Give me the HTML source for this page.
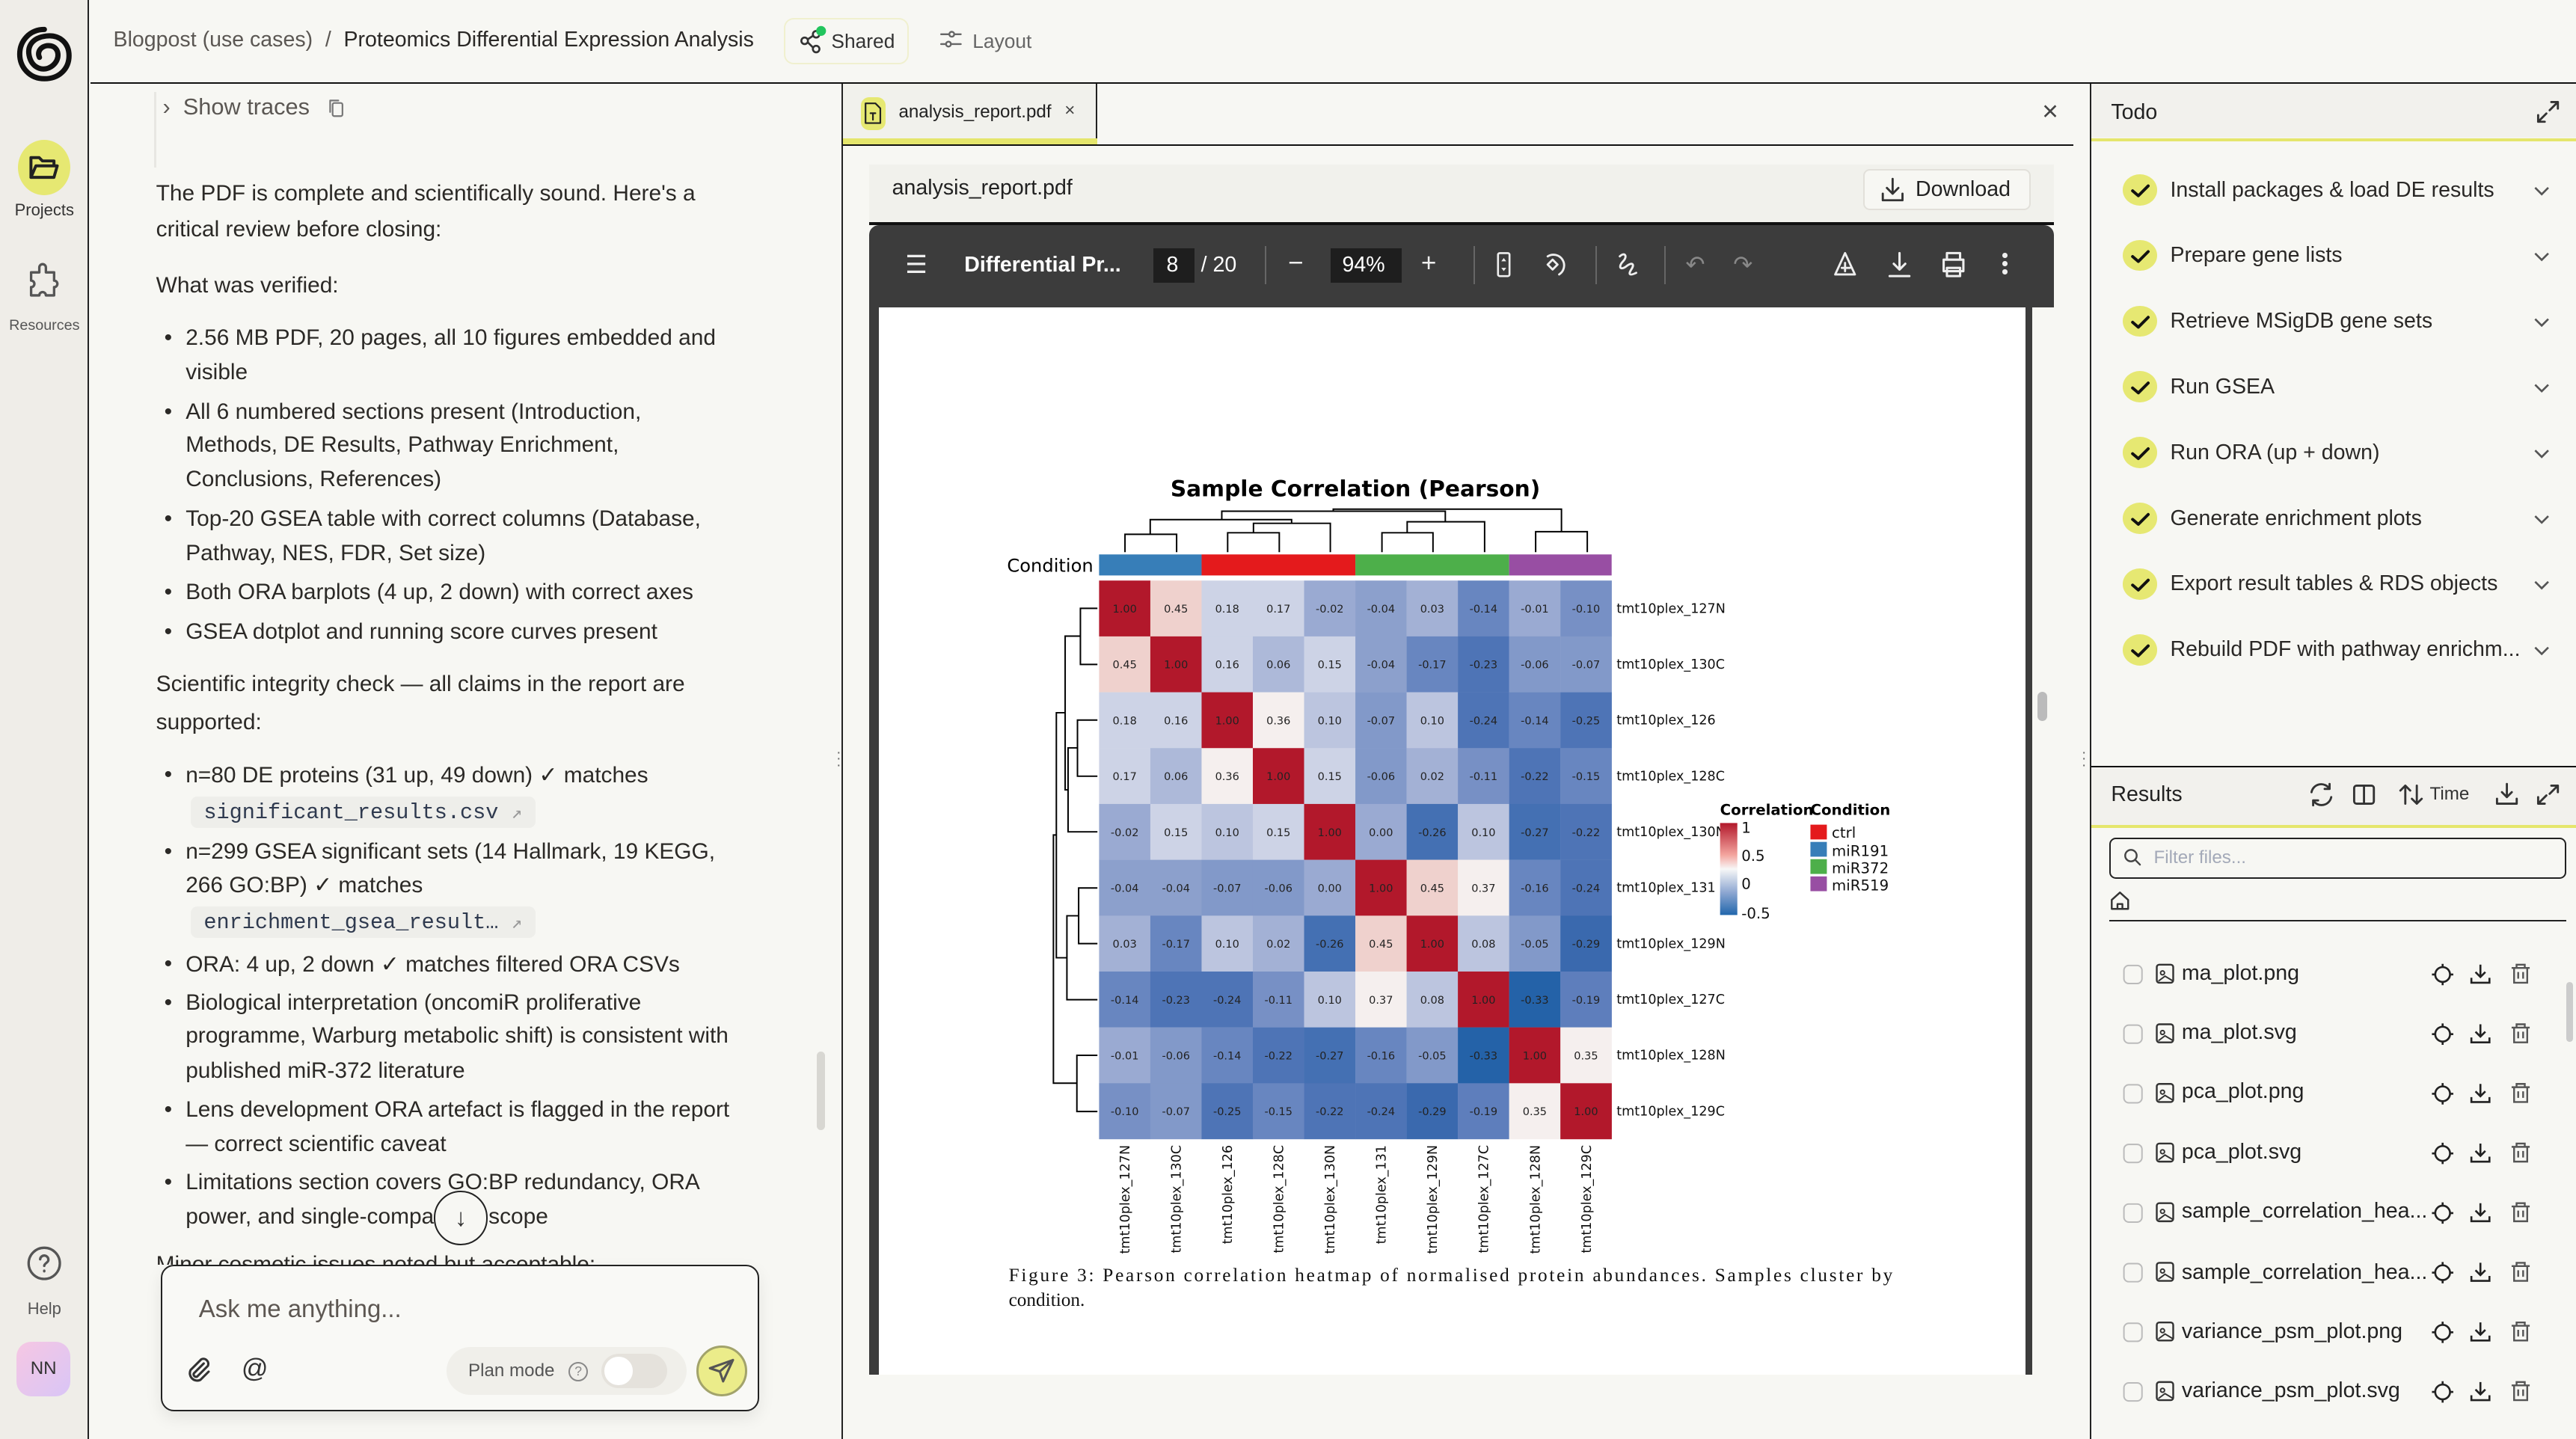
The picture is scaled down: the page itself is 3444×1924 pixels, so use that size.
<!DOCTYPE html>
<html><head><meta charset="utf-8"><style>
*{box-sizing:border-box;margin:0;padding:0}
html,body{width:3444px;height:1924px;overflow:hidden;background:#f7f7f3}
#r{zoom:2.19643;width:1568px;height:876px;position:relative;font-family:"Liberation Sans",sans-serif;color:#2a2826;background:#f7f7f3}
.a{position:absolute;white-space:nowrap}
.t{font-size:13.6px;color:#2b2926}
.code{font-family:"Liberation Mono",monospace;font-size:13px;color:#2f3a4f;background:#eeeeea;border-radius:4px;padding:2px 8px}
svg{position:absolute;overflow:visible}
.ic{fill:none;stroke:#333;stroke-width:1.5;stroke-linecap:round;stroke-linejoin:round}
.todo .c{position:absolute;left:1292px;width:21px;height:19px;border-radius:50%;background:#e6e872}
.hm text{font-family:"DejaVu Sans",sans-serif}
.hm text.serif{font-family:"Liberation Serif",serif}
.cv text{font-size:6.6px;text-anchor:middle;fill:#222}
.p1{fill:#b2182b}.p45{fill:#efd1cd}.p36{fill:#f5efee}.q18{fill:#cdd3e6}.q10{fill:#bcc5df}.q06{fill:#adb9d9}.q02{fill:#a3b1d5}.q00{fill:#9aaad2}.n04{fill:#8ca0cc}.n06{fill:#8299c9}.n10{fill:#7790c5}.n15{fill:#6886c0}.n19{fill:#5e7ebc}.n23{fill:#4e74b6}.n27{fill:#4470b3}.n29{fill:#3a69ae}.n33{fill:#2462a8}
</style></head><body><div id="r">

<!-- left rail -->
<div class="a" style="left:0;top:0;width:54px;height:876px;background:#efede8;border-right:1px solid #222"></div>
<svg style="left:10px;top:16px" width="34" height="34" viewBox="0 0 34 34"><path d="M17 2C8 2 2 9 2 17s6 15 15 15 15-6 15-14S26 5 18 6 6 12 8 19s9 9 14 5 4-11-1-12-9 3-7 7" fill="none" stroke="#111" stroke-width="3.2" stroke-linecap="round"/></svg>
<div class="a" style="left:11px;top:85px;width:32px;height:34px;border-radius:50%;background:#e6e872"></div>
<svg style="left:17px;top:92px" width="20" height="20" viewBox="0 0 20 20"><path class="ic" style="stroke:#222;stroke-width:1.8" d="M2 4h5l2 2h7v3M2 4v12h14l2-7H5l-3 7"/></svg>
<div class="a" style="left:0;width:54px;text-align:center;top:122px;font-size:10px;color:#333">Projects</div>
<svg style="left:16px;top:160px" width="22" height="24" viewBox="0 0 22 24"><path class="ic" style="stroke:#555" d="M8 3a2 2 0 014 0v3h5v5a2 2 0 010 4v5h-5a2 2 0 00-4 0H3v-5a2 2 0 000-4V6h5z"/></svg>
<div class="a" style="left:0;width:54px;text-align:center;top:193px;font-size:9px;color:#555">Resources</div>
<svg style="left:16px;top:758px" width="22" height="22" viewBox="0 0 22 22"><circle cx="11" cy="11" r="9.5" class="ic" style="stroke:#555"/><path class="ic" style="stroke:#555" d="M8.5 8.5a2.5 2.5 0 015 .5c0 1.5-2.5 2-2.5 3.5M11 15.5v.3"/></svg>
<div class="a" style="left:0;width:54px;text-align:center;top:791px;font-size:10px;color:#555">Help</div>
<div class="a" style="left:10px;top:817px;width:33px;height:33px;border-radius:9px;background:linear-gradient(135deg,#f6c7e3,#d9c5f6);font-size:11px;color:#333;text-align:center;line-height:33px">NN</div>

<!-- header -->
<div class="a" style="left:55px;top:50px;width:1513px;height:1px;background:#111"></div>
<div class="a" style="left:69px;top:17px;font-size:13px;color:#5b5753">Blogpost (use cases) <span style="margin:0 4px">/</span> <span style="color:#2a2826">Proteomics Differential Expression Analysis</span></div>
<div class="a" style="left:477px;top:11px;width:76px;height:28px;border:1px solid #f0f0cf;border-radius:6px"></div>
<svg style="left:486px;top:17px" width="16" height="16" viewBox="0 0 16 16"><circle cx="4" cy="8" r="2" class="ic" style="stroke-width:1.2"/><circle cx="11" cy="4" r="2" class="ic" style="stroke-width:1.2"/><circle cx="11" cy="13" r="2" class="ic" style="stroke-width:1.2"/><path class="ic" style="stroke-width:1.2" d="M6 7l3-2M6 9l3 3"/><circle cx="14" cy="2" r="3" fill="#22c55e"/></svg>
<div class="a" style="left:506px;top:18px;font-size:12px;color:#333">Shared</div>
<svg style="left:572px;top:17px" width="14" height="14" viewBox="0 0 14 14"><path class="ic" style="stroke:#666;stroke-width:1.1" d="M1 4h5M9 4h4M1 10h3M7 10h6"/><circle cx="7.5" cy="4" r="1.5" class="ic" style="stroke:#666;stroke-width:1.1"/><circle cx="5.5" cy="10" r="1.5" class="ic" style="stroke:#666;stroke-width:1.1"/></svg>
<div class="a" style="left:592px;top:18px;font-size:12px;color:#666">Layout</div>

<!-- chat panel -->
<div class="a" style="left:512px;top:51px;width:1px;height:825px;background:#222"></div>
<div class="a" style="left:94px;top:56px;width:1px;height:46px;background:#e8e7e2"></div>
<div class="a" style="left:99px;top:57px;font-size:14px;color:#5b5753">›&nbsp; Show traces</div>
<svg style="left:199px;top:59px" width="12" height="13" viewBox="0 0 12 13"><rect x="3.5" y="3.5" width="6" height="8" rx="1" class="ic" style="stroke:#777;stroke-width:1"/><path class="ic" style="stroke:#777;stroke-width:1" d="M2 9V2h5"/></svg>
<div class="a t" style="left:95px;top:110px">The PDF is complete and scientifically sound. Here's a</div>
<div class="a t" style="left:95px;top:132px">critical review before closing:</div>
<div class="a t" style="left:95px;top:166px">What was verified:</div>
<div class="a t" style="left:100px;top:198px">•</div><div class="a t" style="left:113px;top:198px">2.56 MB PDF, 20 pages, all 10 figures embedded and</div>
<div class="a t" style="left:113px;top:219px">visible</div>
<div class="a t" style="left:100px;top:243px">•</div><div class="a t" style="left:113px;top:243px">All 6 numbered sections present (Introduction,</div>
<div class="a t" style="left:113px;top:263px">Methods, DE Results, Pathway Enrichment,</div>
<div class="a t" style="left:113px;top:284px">Conclusions, References)</div>
<div class="a t" style="left:100px;top:308px">•</div><div class="a t" style="left:113px;top:308px">Top-20 GSEA table with correct columns (Database,</div>
<div class="a t" style="left:113px;top:329px">Pathway, NES, FDR, Set size)</div>
<div class="a t" style="left:100px;top:353px">•</div><div class="a t" style="left:113px;top:353px">Both ORA barplots (4 up, 2 down) with correct axes</div>
<div class="a t" style="left:100px;top:377px">•</div><div class="a t" style="left:113px;top:377px">GSEA dotplot and running score curves present</div>
<div class="a t" style="left:95px;top:409px">Scientific integrity check — all claims in the report are</div>
<div class="a t" style="left:95px;top:432px">supported:</div>
<div class="a t" style="left:100px;top:464px">•</div><div class="a t" style="left:113px;top:464px">n=80 DE proteins (31 up, 49 down) ✓ matches</div>
<div class="a code" style="left:116px;top:485px">significant_results.csv <span style="color:#999;font-size:11px">↗</span></div>
<div class="a t" style="left:100px;top:511px">•</div><div class="a t" style="left:113px;top:511px">n=299 GSEA significant sets (14 Hallmark, 19 KEGG,</div>
<div class="a t" style="left:113px;top:531px">266 GO:BP) ✓ matches</div>
<div class="a code" style="left:116px;top:552px">enrichment_gsea_result… <span style="color:#999;font-size:11px">↗</span></div>
<div class="a t" style="left:100px;top:579px">•</div><div class="a t" style="left:113px;top:579px">ORA: 4 up, 2 down ✓ matches filtered ORA CSVs</div>
<div class="a t" style="left:100px;top:603px">•</div><div class="a t" style="left:113px;top:603px">Biological interpretation (oncomiR proliferative</div>
<div class="a t" style="left:113px;top:623px">programme, Warburg metabolic shift) is consistent with</div>
<div class="a t" style="left:113px;top:644px">published miR-372 literature</div>
<div class="a t" style="left:100px;top:668px">•</div><div class="a t" style="left:113px;top:668px">Lens development ORA artefact is flagged in the report</div>
<div class="a t" style="left:113px;top:689px">— correct scientific caveat</div>
<div class="a t" style="left:100px;top:712px">•</div><div class="a t" style="left:113px;top:712px">Limitations section covers GO:BP redundancy, ORA</div>
<div class="a t" style="left:113px;top:733px">power, and single-comparison scope</div>
<div class="a t" style="left:95px;top:762px;height:8px;overflow:hidden">Minor cosmetic issues noted but acceptable:</div>
<div class="a" style="left:264px;top:725px;width:33px;height:33px;border-radius:50%;border:1px solid #222;background:#f7f7f3;text-align:center;line-height:31px;font-size:15px;color:#333">↓</div>
<div class="a" style="left:497px;top:640px;width:5px;height:48px;border-radius:3px;background:#d8d7d2"></div>
<div class="a" style="left:98px;top:770px;width:364px;height:89px;border:1px solid #222;border-radius:8px;background:#f9f9f6;box-shadow:0 4px 10px rgba(0,0,0,.08)"></div>
<div class="a" style="left:121px;top:788px;font-size:15px;color:#5d5752">Ask me anything...</div>
<svg style="left:112px;top:825px" width="18" height="18" viewBox="0 0 18 18"><path class="ic" style="stroke-width:1.4" d="M12 5l-6 6a1.5 1.5 0 002 2l6.5-6.5a3 3 0 00-4-4L4 9a4.5 4.5 0 006 6l5-5"/></svg>
<div class="a" style="left:147px;top:824px;font-size:16px;color:#333">@</div>
<div class="a" style="left:272px;top:820px;width:146px;height:29px;border-radius:15px;background:#f0efea"></div>
<div class="a" style="left:285px;top:828px;font-size:11px;color:#555">Plan mode</div>
<div class="a" style="left:346px;top:829px;width:12px;height:12px;border:1px solid #888;border-radius:50%;font-size:8px;color:#888;text-align:center;line-height:10px">?</div>
<div class="a" style="left:366px;top:824px;width:40px;height:21px;border-radius:11px;background:#e5e2dc"></div>
<div class="a" style="left:368px;top:826px;width:17px;height:17px;border-radius:50%;background:#fff"></div>
<div class="a" style="left:424px;top:819px;width:31px;height:31px;border-radius:50%;background:#ebec8a;border:1.5px solid #a2a36b"></div>
<svg style="left:431px;top:826px" width="17" height="17" viewBox="0 0 17 17"><path class="ic" style="stroke:#555;stroke-width:1.4" d="M15 2L1 7l6 2 2 6zM15 2L7 9"/></svg>
<div class="a" style="left:509px;top:456px;font-size:9px;color:#666;line-height:4px">·<br>·<br>·</div>

<!-- PDF panel -->
<div class="a" style="left:1272px;top:51px;width:1px;height:825px;background:#222"></div>
<div class="a" style="left:513px;top:51px;width:155px;height:37px;background:#f1f1ec;border-right:1px solid #222"></div>
<div class="a" style="left:513px;top:84px;width:155px;height:4px;background:#e5e66c"></div>
<div class="a" style="left:513px;top:88px;width:749px;height:1px;background:#111"></div>
<div class="a" style="left:524px;top:59px;width:15px;height:20px;border-radius:5px;background:#e6e872"></div>
<svg style="left:526px;top:62px" width="11" height="14" viewBox="0 0 11 14"><path class="ic" style="stroke:#222;stroke-width:1" d="M1 1h6l3 3v9H1zM4 7h3M5.5 7v4"/></svg>
<div class="a" style="left:547px;top:62px;font-size:11px;color:#222">analysis_report.pdf</div>
<div class="a" style="left:648px;top:61px;font-size:11px;color:#444">×</div>
<div class="a" style="left:1243px;top:58px;font-size:17px;color:#444">×</div>
<div class="a" style="left:529px;top:100px;width:721px;height:35px;background:#f1f1ec"></div>
<div class="a" style="left:529px;top:135px;width:721px;height:2px;background:#111"></div>
<div class="a" style="left:543px;top:107px;font-size:13px;color:#222">analysis_report.pdf</div>
<div class="a" style="left:1134px;top:103px;width:102px;height:25px;border:1px solid #e2e0da;border-radius:4px;background:#f7f7f3"></div>
<svg style="left:1145px;top:108px" width="14" height="15" viewBox="0 0 14 15"><path class="ic" style="stroke:#333;stroke-width:1.3" d="M7 1v9M3.5 6.5L7 10l3.5-3.5M1 10v4h12v-4"/></svg>
<div class="a" style="left:1166px;top:108px;font-size:13px;color:#222">Download</div>
<div class="a" style="left:529px;top:137px;width:721px;height:50px;background:#3c3c3c;border-radius:6px 6px 0 0"></div>
<div class="a" style="left:529px;top:187px;width:6px;height:650px;background:#3c3c3c"></div>
<div class="a" style="left:1233px;top:187px;width:4px;height:650px;background:#3c3c3c"></div>
<div class="a" style="left:535px;top:187px;width:698px;height:650px;background:#fff"></div>
<div class="a" style="left:1240px;top:421px;width:6px;height:18px;border-radius:3px;background:#bbb"></div>
<div class="a" style="left:551px;top:152px;font-size:15px;color:#eee">☰</div>
<div class="a" style="left:587px;top:154px;font-size:13px;color:#fff;font-weight:bold">Differential Pr...</div>
<div class="a" style="left:702px;top:151px;width:25px;height:21px;background:#1e1e1e"></div>
<div class="a" style="left:710px;top:154px;font-size:13px;color:#fff">8</div>
<div class="a" style="left:731px;top:154px;font-size:13px;color:#fff">/ 20</div>
<div class="a" style="left:770px;top:150px;width:1px;height:23px;background:#666"></div>
<div class="a" style="left:784px;top:151px;font-size:16px;color:#eee">−</div>
<div class="a" style="left:810px;top:151px;width:43px;height:21px;background:#1e1e1e"></div>
<div class="a" style="left:817px;top:154px;font-size:13px;color:#fff">94%</div>
<div class="a" style="left:865px;top:151px;font-size:16px;color:#eee">+</div>
<div class="a" style="left:897px;top:150px;width:1px;height:23px;background:#666"></div>
<svg style="left:908px;top:152px" width="16" height="18" viewBox="0 0 16 18"><rect x="4" y="2" width="7" height="14" rx="1" class="ic" style="stroke:#eee;stroke-width:1.2"/><path d="M7.5 5l-1.5 2h3zM7.5 13l-1.5-2h3z" fill="#eee"/></svg>
<svg style="left:936px;top:152px" width="18" height="18" viewBox="0 0 18 18"><path class="ic" style="stroke:#eee;stroke-width:1.3" d="M6 4a6 6 0 117 11M9 6l-3 3 3 3 3-3z"/></svg>
<div class="a" style="left:971px;top:150px;width:1px;height:23px;background:#666"></div>
<svg style="left:983px;top:152px" width="17" height="18" viewBox="0 0 17 18"><path class="ic" style="stroke:#eee;stroke-width:1.3" d="M3 4c3-3 5 0 2 3s-2 6 2 3 5-1 3 2-1 4 3 2"/></svg>
<div class="a" style="left:1013px;top:150px;width:1px;height:23px;background:#666"></div>
<div class="a" style="left:1026px;top:153px;font-size:14px;color:#888">↶</div>
<div class="a" style="left:1055px;top:153px;font-size:14px;color:#888">↷</div>
<svg style="left:1114px;top:152px" width="18" height="18" viewBox="0 0 18 18"><path class="ic" style="stroke:#eee;stroke-width:1.3" d="M3 15l6-13 6 13zM9 8v5M7 11h5"/></svg>
<svg style="left:1148px;top:152px" width="16" height="18" viewBox="0 0 16 18"><path class="ic" style="stroke:#eee;stroke-width:1.4" d="M8 2v10M4.5 8.5L8 12l3.5-3.5M2 16h12"/></svg>
<svg style="left:1180px;top:152px" width="18" height="18" viewBox="0 0 18 18"><path class="ic" style="stroke:#eee;stroke-width:1.4" d="M5 6V2h8v4M3 6h12v7H3zM5 11h8v5H5z"/></svg>
<div class="a" style="left:1219px;top:154px;width:3px;height:3px;border-radius:50%;background:#eee;box-shadow:0 5px 0 #eee,0 10px 0 #eee"></div>

<!-- heatmap -->
<svg class="hm" style="left:0;top:0" width="1568" height="876" viewBox="0 0 1568 876">
<text x="825" y="302" text-anchor="middle" font-size="13.5" font-weight="bold" fill="#000">Sample Correlation (Pearson)</text>
<text x="613" y="348" font-size="11" fill="#000">Condition</text>
<rect x="669" y="337.5" width="62.4" height="12.8" fill="#377eb8"/>
<rect x="731.4" y="337.5" width="93.6" height="12.8" fill="#e41a1c"/>
<rect x="825" y="337.5" width="93.6" height="12.8" fill="#4daf4a"/>
<rect x="918.6" y="337.5" width="62.4" height="12.8" fill="#984ea3"/>
<g transform="matrix(0.3571,0,0,0.3194,605.5,273.2)" fill="none" stroke="#000">
<path vector-effect="non-scaling-stroke" stroke-width="0.9" d="M222 197V163H310V197M397 197V160H485V197M441 160V142H572V197M265 163V135H506V142M387 135V119H768V139M660 197V160H747V197M703 160V139H835V197M577 119V115H966V158M922 197V158H1010V197M175 304H146V411H175M175 517H141V624H175M141 570H125V730H175M146 357H120V650H125M175 837H143V943H175M143 890H123V1050H175M120 503H105V970H123M175 1156H140V1263H175M105 736H100V1209H140"/>
</g>
<g class="cv">
<g transform="translate(0,353.4)"><rect x="669" width="31.3" height="34.1" class="p1"/><rect x="700.2" width="31.3" height="34.1" class="p45"/><rect x="731.4" width="31.3" height="34.1" class="q18"/><rect x="762.6" width="31.3" height="34.1" class="q18"/><rect x="793.8" width="31.3" height="34.1" class="q00"/><rect x="825" width="31.3" height="34.1" class="n04"/><rect x="856.2" width="31.3" height="34.1" class="q02"/><rect x="887.4" width="31.3" height="34.1" class="n15"/><rect x="918.6" width="31.3" height="34.1" class="q00"/><rect x="949.8" width="31.3" height="34.1" class="n10"/>
<text x="684.6" y="19.5">1.00</text><text x="715.8" y="19.5">0.45</text><text x="747" y="19.5">0.18</text><text x="778.2" y="19.5">0.17</text><text x="809.4" y="19.5">-0.02</text><text x="840.6" y="19.5">-0.04</text><text x="871.8" y="19.5">0.03</text><text x="903" y="19.5">-0.14</text><text x="934.2" y="19.5">-0.01</text><text x="965.4" y="19.5">-0.10</text></g>
<g transform="translate(0,387.4)"><rect x="669" width="31.3" height="34.1" class="p45"/><rect x="700.2" width="31.3" height="34.1" class="p1"/><rect x="731.4" width="31.3" height="34.1" class="q18"/><rect x="762.6" width="31.3" height="34.1" class="q06"/><rect x="793.8" width="31.3" height="34.1" class="q18"/><rect x="825" width="31.3" height="34.1" class="n04"/><rect x="856.2" width="31.3" height="34.1" class="n15"/><rect x="887.4" width="31.3" height="34.1" class="n23"/><rect x="918.6" width="31.3" height="34.1" class="n06"/><rect x="949.8" width="31.3" height="34.1" class="n06"/>
<text x="684.6" y="19.5">0.45</text><text x="715.8" y="19.5">1.00</text><text x="747" y="19.5">0.16</text><text x="778.2" y="19.5">0.06</text><text x="809.4" y="19.5">0.15</text><text x="840.6" y="19.5">-0.04</text><text x="871.8" y="19.5">-0.17</text><text x="903" y="19.5">-0.23</text><text x="934.2" y="19.5">-0.06</text><text x="965.4" y="19.5">-0.07</text></g>
<g transform="translate(0,421.4)"><rect x="669" width="31.3" height="34.1" class="q18"/><rect x="700.2" width="31.3" height="34.1" class="q18"/><rect x="731.4" width="31.3" height="34.1" class="p1"/><rect x="762.6" width="31.3" height="34.1" class="p36"/><rect x="793.8" width="31.3" height="34.1" class="q10"/><rect x="825" width="31.3" height="34.1" class="n06"/><rect x="856.2" width="31.3" height="34.1" class="q10"/><rect x="887.4" width="31.3" height="34.1" class="n23"/><rect x="918.6" width="31.3" height="34.1" class="n15"/><rect x="949.8" width="31.3" height="34.1" class="n23"/>
<text x="684.6" y="19.5">0.18</text><text x="715.8" y="19.5">0.16</text><text x="747" y="19.5">1.00</text><text x="778.2" y="19.5">0.36</text><text x="809.4" y="19.5">0.10</text><text x="840.6" y="19.5">-0.07</text><text x="871.8" y="19.5">0.10</text><text x="903" y="19.5">-0.24</text><text x="934.2" y="19.5">-0.14</text><text x="965.4" y="19.5">-0.25</text></g>
<g transform="translate(0,455.4)"><rect x="669" width="31.3" height="34.1" class="q18"/><rect x="700.2" width="31.3" height="34.1" class="q06"/><rect x="731.4" width="31.3" height="34.1" class="p36"/><rect x="762.6" width="31.3" height="34.1" class="p1"/><rect x="793.8" width="31.3" height="34.1" class="q18"/><rect x="825" width="31.3" height="34.1" class="n06"/><rect x="856.2" width="31.3" height="34.1" class="q02"/><rect x="887.4" width="31.3" height="34.1" class="n10"/><rect x="918.6" width="31.3" height="34.1" class="n23"/><rect x="949.8" width="31.3" height="34.1" class="n15"/>
<text x="684.6" y="19.5">0.17</text><text x="715.8" y="19.5">0.06</text><text x="747" y="19.5">0.36</text><text x="778.2" y="19.5">1.00</text><text x="809.4" y="19.5">0.15</text><text x="840.6" y="19.5">-0.06</text><text x="871.8" y="19.5">0.02</text><text x="903" y="19.5">-0.11</text><text x="934.2" y="19.5">-0.22</text><text x="965.4" y="19.5">-0.15</text></g>
<g transform="translate(0,489.4)"><rect x="669" width="31.3" height="34.1" class="q00"/><rect x="700.2" width="31.3" height="34.1" class="q18"/><rect x="731.4" width="31.3" height="34.1" class="q10"/><rect x="762.6" width="31.3" height="34.1" class="q18"/><rect x="793.8" width="31.3" height="34.1" class="p1"/><rect x="825" width="31.3" height="34.1" class="q00"/><rect x="856.2" width="31.3" height="34.1" class="n27"/><rect x="887.4" width="31.3" height="34.1" class="q10"/><rect x="918.6" width="31.3" height="34.1" class="n27"/><rect x="949.8" width="31.3" height="34.1" class="n23"/>
<text x="684.6" y="19.5">-0.02</text><text x="715.8" y="19.5">0.15</text><text x="747" y="19.5">0.10</text><text x="778.2" y="19.5">0.15</text><text x="809.4" y="19.5">1.00</text><text x="840.6" y="19.5">0.00</text><text x="871.8" y="19.5">-0.26</text><text x="903" y="19.5">0.10</text><text x="934.2" y="19.5">-0.27</text><text x="965.4" y="19.5">-0.22</text></g>
<g transform="translate(0,523.4)"><rect x="669" width="31.3" height="34.1" class="n04"/><rect x="700.2" width="31.3" height="34.1" class="n04"/><rect x="731.4" width="31.3" height="34.1" class="n06"/><rect x="762.6" width="31.3" height="34.1" class="n06"/><rect x="793.8" width="31.3" height="34.1" class="q00"/><rect x="825" width="31.3" height="34.1" class="p1"/><rect x="856.2" width="31.3" height="34.1" class="p45"/><rect x="887.4" width="31.3" height="34.1" class="p36"/><rect x="918.6" width="31.3" height="34.1" class="n15"/><rect x="949.8" width="31.3" height="34.1" class="n23"/>
<text x="684.6" y="19.5">-0.04</text><text x="715.8" y="19.5">-0.04</text><text x="747" y="19.5">-0.07</text><text x="778.2" y="19.5">-0.06</text><text x="809.4" y="19.5">0.00</text><text x="840.6" y="19.5">1.00</text><text x="871.8" y="19.5">0.45</text><text x="903" y="19.5">0.37</text><text x="934.2" y="19.5">-0.16</text><text x="965.4" y="19.5">-0.24</text></g>
<g transform="translate(0,557.4)"><rect x="669" width="31.3" height="34.1" class="q02"/><rect x="700.2" width="31.3" height="34.1" class="n15"/><rect x="731.4" width="31.3" height="34.1" class="q10"/><rect x="762.6" width="31.3" height="34.1" class="q02"/><rect x="793.8" width="31.3" height="34.1" class="n27"/><rect x="825" width="31.3" height="34.1" class="p45"/><rect x="856.2" width="31.3" height="34.1" class="p1"/><rect x="887.4" width="31.3" height="34.1" class="q10"/><rect x="918.6" width="31.3" height="34.1" class="n06"/><rect x="949.8" width="31.3" height="34.1" class="n29"/>
<text x="684.6" y="19.5">0.03</text><text x="715.8" y="19.5">-0.17</text><text x="747" y="19.5">0.10</text><text x="778.2" y="19.5">0.02</text><text x="809.4" y="19.5">-0.26</text><text x="840.6" y="19.5">0.45</text><text x="871.8" y="19.5">1.00</text><text x="903" y="19.5">0.08</text><text x="934.2" y="19.5">-0.05</text><text x="965.4" y="19.5">-0.29</text></g>
<g transform="translate(0,591.4)"><rect x="669" width="31.3" height="34.1" class="n15"/><rect x="700.2" width="31.3" height="34.1" class="n23"/><rect x="731.4" width="31.3" height="34.1" class="n23"/><rect x="762.6" width="31.3" height="34.1" class="n10"/><rect x="793.8" width="31.3" height="34.1" class="q10"/><rect x="825" width="31.3" height="34.1" class="p36"/><rect x="856.2" width="31.3" height="34.1" class="q10"/><rect x="887.4" width="31.3" height="34.1" class="p1"/><rect x="918.6" width="31.3" height="34.1" class="n33"/><rect x="949.8" width="31.3" height="34.1" class="n19"/>
<text x="684.6" y="19.5">-0.14</text><text x="715.8" y="19.5">-0.23</text><text x="747" y="19.5">-0.24</text><text x="778.2" y="19.5">-0.11</text><text x="809.4" y="19.5">0.10</text><text x="840.6" y="19.5">0.37</text><text x="871.8" y="19.5">0.08</text><text x="903" y="19.5">1.00</text><text x="934.2" y="19.5">-0.33</text><text x="965.4" y="19.5">-0.19</text></g>
<g transform="translate(0,625.4)"><rect x="669" width="31.3" height="34.1" class="q00"/><rect x="700.2" width="31.3" height="34.1" class="n06"/><rect x="731.4" width="31.3" height="34.1" class="n15"/><rect x="762.6" width="31.3" height="34.1" class="n23"/><rect x="793.8" width="31.3" height="34.1" class="n27"/><rect x="825" width="31.3" height="34.1" class="n15"/><rect x="856.2" width="31.3" height="34.1" class="n06"/><rect x="887.4" width="31.3" height="34.1" class="n33"/><rect x="918.6" width="31.3" height="34.1" class="p1"/><rect x="949.8" width="31.3" height="34.1" class="p36"/>
<text x="684.6" y="19.5">-0.01</text><text x="715.8" y="19.5">-0.06</text><text x="747" y="19.5">-0.14</text><text x="778.2" y="19.5">-0.22</text><text x="809.4" y="19.5">-0.27</text><text x="840.6" y="19.5">-0.16</text><text x="871.8" y="19.5">-0.05</text><text x="903" y="19.5">-0.33</text><text x="934.2" y="19.5">1.00</text><text x="965.4" y="19.5">0.35</text></g>
<g transform="translate(0,659.4)"><rect x="669" width="31.3" height="34.1" class="n10"/><rect x="700.2" width="31.3" height="34.1" class="n06"/><rect x="731.4" width="31.3" height="34.1" class="n23"/><rect x="762.6" width="31.3" height="34.1" class="n15"/><rect x="793.8" width="31.3" height="34.1" class="n23"/><rect x="825" width="31.3" height="34.1" class="n23"/><rect x="856.2" width="31.3" height="34.1" class="n29"/><rect x="887.4" width="31.3" height="34.1" class="n19"/><rect x="918.6" width="31.3" height="34.1" class="p36"/><rect x="949.8" width="31.3" height="34.1" class="p1"/>
<text x="684.6" y="19.5">-0.10</text><text x="715.8" y="19.5">-0.07</text><text x="747" y="19.5">-0.25</text><text x="778.2" y="19.5">-0.15</text><text x="809.4" y="19.5">-0.22</text><text x="840.6" y="19.5">-0.24</text><text x="871.8" y="19.5">-0.29</text><text x="903" y="19.5">-0.19</text><text x="934.2" y="19.5">0.35</text><text x="965.4" y="19.5">1.00</text></g>
</g>
<g font-size="8" fill="#111">
<text x="984" y="373">tmt10plex_127N</text><text x="984" y="407">tmt10plex_130C</text><text x="984" y="441">tmt10plex_126</text><text x="984" y="475">tmt10plex_128C</text><text x="984" y="509">tmt10plex_130N</text><text x="984" y="543">tmt10plex_131</text><text x="984" y="577">tmt10plex_129N</text><text x="984" y="611">tmt10plex_127C</text><text x="984" y="645">tmt10plex_128N</text><text x="984" y="679">tmt10plex_129C</text>
</g>
<g font-size="8" fill="#111" text-anchor="end">
<text transform="translate(687.5,697) rotate(-90)">tmt10plex_127N</text><text transform="translate(718.7,697) rotate(-90)">tmt10plex_130C</text><text transform="translate(749.9,697) rotate(-90)">tmt10plex_126</text><text transform="translate(781.1,697) rotate(-90)">tmt10plex_128C</text><text transform="translate(812.3,697) rotate(-90)">tmt10plex_130N</text><text transform="translate(843.5,697) rotate(-90)">tmt10plex_131</text><text transform="translate(874.7,697) rotate(-90)">tmt10plex_129N</text><text transform="translate(905.9,697) rotate(-90)">tmt10plex_127C</text><text transform="translate(937.1,697) rotate(-90)">tmt10plex_128N</text><text transform="translate(968.3,697) rotate(-90)">tmt10plex_129C</text>
</g>
<defs><linearGradient id="lg" x1="0" y1="0" x2="0" y2="1"><stop offset="0" stop-color="#b2182b"/><stop offset=".35" stop-color="#f4a6a0"/><stop offset=".5" stop-color="#f7f7f7"/><stop offset=".75" stop-color="#8fa8d2"/><stop offset="1" stop-color="#2166ac"/></linearGradient></defs>
<text x="1047" y="496" font-size="9" font-weight="bold" fill="#000">Correlation</text>
<text x="1102" y="496" font-size="9" font-weight="bold" fill="#000">Condition</text>
<rect x="1047" y="501" width="10.5" height="56" fill="url(#lg)"/>
<g font-size="9" fill="#111"><text x="1060" y="507">1</text><text x="1060" y="524">0.5</text><text x="1060" y="541">0</text><text x="1060" y="559">-0.5</text>
<rect x="1102" y="502" width="10" height="9" fill="#e41a1c"/><rect x="1102" y="512.5" width="10" height="9" fill="#377eb8"/><rect x="1102" y="523" width="10" height="9" fill="#4daf4a"/><rect x="1102" y="533.5" width="10" height="9" fill="#984ea3"/>
<text x="1115" y="510">ctrl</text><text x="1115" y="521">miR191</text><text x="1115" y="531.5">miR372</text><text x="1115" y="542">miR519</text></g>
<g font-size="11.5" fill="#111"><text class="serif" style="font-family:'Liberation Serif',serif" x="614" y="780" textLength="538" lengthAdjust="spacing">Figure 3:  Pearson correlation heatmap of normalised protein abundances.  Samples cluster by</text><text class="serif" style="font-family:'Liberation Serif',serif" x="614" y="795">condition.</text></g>
</svg>

<!-- right panel -->
<div class="a" style="left:1273px;top:51px;width:295px;height:33px;background:#f2f1ed"></div>
<div class="a" style="left:1273px;top:84px;width:295px;height:2px;background:#e5e66c"></div>
<div class="a" style="left:1285px;top:61px;font-size:13px;color:#222">Todo</div>
<svg style="left:1543px;top:60px" width="16" height="16" viewBox="0 0 16 16"><path class="ic" style="stroke-width:1.3" d="M10 2h4v4M14 2L9 7M6 14H2v-4M2 14l5-5"/></svg>
<div class="todo">
<div class="c" style="top:106px"></div><div class="c" style="top:146px"></div><div class="c" style="top:186px"></div><div class="c" style="top:226px"></div><div class="c" style="top:266px"></div><div class="c" style="top:306px"></div><div class="c" style="top:346px"></div><div class="c" style="top:386px"></div>
</div>
<svg style="left:1292px;top:100px" width="21" height="310" viewBox="0 0 21 310"><path fill="none" stroke="#111" stroke-width="1.8" stroke-linecap="round" stroke-linejoin="round" d="M6 16l3.5 3 6-6M6 56l3.5 3 6-6M6 96l3.5 3 6-6M6 136l3.5 3 6-6M6 176l3.5 3 6-6M6 216l3.5 3 6-6M6 256l3.5 3 6-6M6 296l3.5 3 6-6"/></svg>
<div class="a" style="left:1321px;top:108px;font-size:13px;color:#2a2826;line-height:16px">Install packages &amp; load DE results</div>
<div class="a" style="left:1321px;top:148px;font-size:13px;color:#2a2826">Prepare gene lists</div>
<div class="a" style="left:1321px;top:188px;font-size:13px;color:#2a2826">Retrieve MSigDB gene sets</div>
<div class="a" style="left:1321px;top:228px;font-size:13px;color:#2a2826">Run GSEA</div>
<div class="a" style="left:1321px;top:268px;font-size:13px;color:#2a2826">Run ORA (up + down)</div>
<div class="a" style="left:1321px;top:308px;font-size:13px;color:#2a2826">Generate enrichment plots</div>
<div class="a" style="left:1321px;top:348px;font-size:13px;color:#2a2826">Export result tables &amp; RDS objects</div>
<div class="a" style="left:1321px;top:388px;font-size:13px;color:#2a2826">Rebuild PDF with pathway enrichm...</div>
<svg style="left:1541px;top:110px" width="12" height="300" viewBox="0 0 12 300"><path fill="none" stroke="#555" stroke-width="1.2" d="M2 4l4 4 4-4M2 44l4 4 4-4M2 84l4 4 4-4M2 124l4 4 4-4M2 164l4 4 4-4M2 204l4 4 4-4M2 244l4 4 4-4M2 284l4 4 4-4"/></svg>
<div class="a" style="left:1267px;top:456px;font-size:9px;color:#666;line-height:4px">·<br>·<br>·</div>
<div class="a" style="left:1273px;top:466px;width:295px;height:1px;background:#111"></div>
<div class="a" style="left:1273px;top:467px;width:295px;height:35px;background:#f2f1ed"></div>
<div class="a" style="left:1273px;top:502px;width:295px;height:2px;background:#e5e66c"></div>
<div class="a" style="left:1285px;top:476px;font-size:13px;color:#222">Results</div>
<svg style="left:1405px;top:476px" width="16" height="15" viewBox="0 0 16 15"><path class="ic" style="stroke-width:1.3" d="M2 6a6 6 0 0111-2M14 9a6 6 0 01-11 2M13 1v3h-3M3 14v-3h3"/></svg>
<svg style="left:1431px;top:476px" width="16" height="15" viewBox="0 0 16 15"><rect x="2" y="2" width="12" height="11" rx="1.5" class="ic" style="stroke-width:1.3"/><path class="ic" style="stroke-width:1.3" d="M8 2v11"/></svg>
<svg style="left:1460px;top:476px" width="16" height="15" viewBox="0 0 16 15"><path class="ic" style="stroke-width:1.3" d="M4 13V2M1 5l3-3 3 3M11 2v11M8 10l3 3 3-3"/></svg>
<div class="a" style="left:1479px;top:477px;font-size:11px;color:#333">Time</div>
<svg style="left:1518px;top:476px" width="16" height="15" viewBox="0 0 16 15"><path class="ic" style="stroke-width:1.3" d="M8 1v8M5 6l3 3 3-3M2 10v3h12v-3"/></svg>
<svg style="left:1543px;top:476px" width="16" height="15" viewBox="0 0 16 15"><path class="ic" style="stroke-width:1.3" d="M10 2h4v4M14 2L9 7M6 13H2V9M2 13l5-5"/></svg>
<div class="a" style="left:1284px;top:510px;width:278px;height:25px;border:1px solid #222;border-radius:4px"></div>
<svg style="left:1292px;top:516px" width="12" height="12" viewBox="0 0 12 12"><circle cx="5" cy="5" r="3.5" class="ic" style="stroke:#444;stroke-width:1.1"/><path class="ic" style="stroke:#444;stroke-width:1.1" d="M8 8l2.5 2.5"/></svg>
<div class="a" style="left:1311px;top:516px;font-size:11px;color:#a3a9b8">Filter files...</div>
<svg style="left:1284px;top:542px" width="13" height="13" viewBox="0 0 13 13"><path class="ic" style="stroke:#333;stroke-width:1.1" d="M1.5 6L6.5 1.5 11.5 6v5.5h-10zM5 11.5V8.5h3v3"/></svg>
<div class="a" style="left:1284px;top:560px;width:278px;height:1px;background:#222"></div>
<div class="a" style="left:1562px;top:598px;width:4px;height:36px;border-radius:2px;background:#ccc"></div>
<svg style="left:1290px;top:583px" width="260" height="275" viewBox="0 0 260 275">
<g id="row"><rect x="3" y="4.5" width="11" height="11" rx="3" fill="none" stroke="#bbb" stroke-width="0.9"/><rect x="23" y="4" width="10" height="11" rx="1.5" fill="none" stroke="#333" stroke-width="1.1"/><circle cx="26.5" cy="9" r="1.2" fill="none" stroke="#333" stroke-width="0.9"/><path d="M24 14l4-3 5 3" fill="none" stroke="#333" stroke-width="0.9"/><circle cx="197" cy="10" r="4.5" fill="none" stroke="#222" stroke-width="1.2"/><path d="M197 3.5v2M197 14.5v2M190.5 10h2M201.5 10h2M220 4v7M217 8.5l3 3 3-3M214.5 12v3h11v-3" fill="none" stroke="#222" stroke-width="1.2"/><path d="M239 6h11M242 6V4h5v2M240.5 6v9h8V6M243 8.5v4M246 8.5v4" fill="none" stroke="#555" stroke-width="1.1"/></g>
<use href="#row" y="36.3"/><use href="#row" y="72.6"/><use href="#row" y="108.9"/><use href="#row" y="145.2"/><use href="#row" y="181.5"/><use href="#row" y="217.8"/><use href="#row" y="254.1"/>
</svg>
<div class="a" style="left:1328px;top:585px;font-size:13px;color:#222">ma_plot.png</div>
<div class="a" style="left:1328px;top:621px;font-size:13px;color:#222">ma_plot.svg</div>
<div class="a" style="left:1328px;top:657px;font-size:13px;color:#222">pca_plot.png</div>
<div class="a" style="left:1328px;top:694px;font-size:13px;color:#222">pca_plot.svg</div>
<div class="a" style="left:1328px;top:730px;font-size:13px;color:#222">sample_correlation_hea...</div>
<div class="a" style="left:1328px;top:767px;font-size:13px;color:#222">sample_correlation_hea...</div>
<div class="a" style="left:1328px;top:803px;font-size:13px;color:#222">variance_psm_plot.png</div>
<div class="a" style="left:1328px;top:839px;font-size:13px;color:#222">variance_psm_plot.svg</div>
</div></body></html>
